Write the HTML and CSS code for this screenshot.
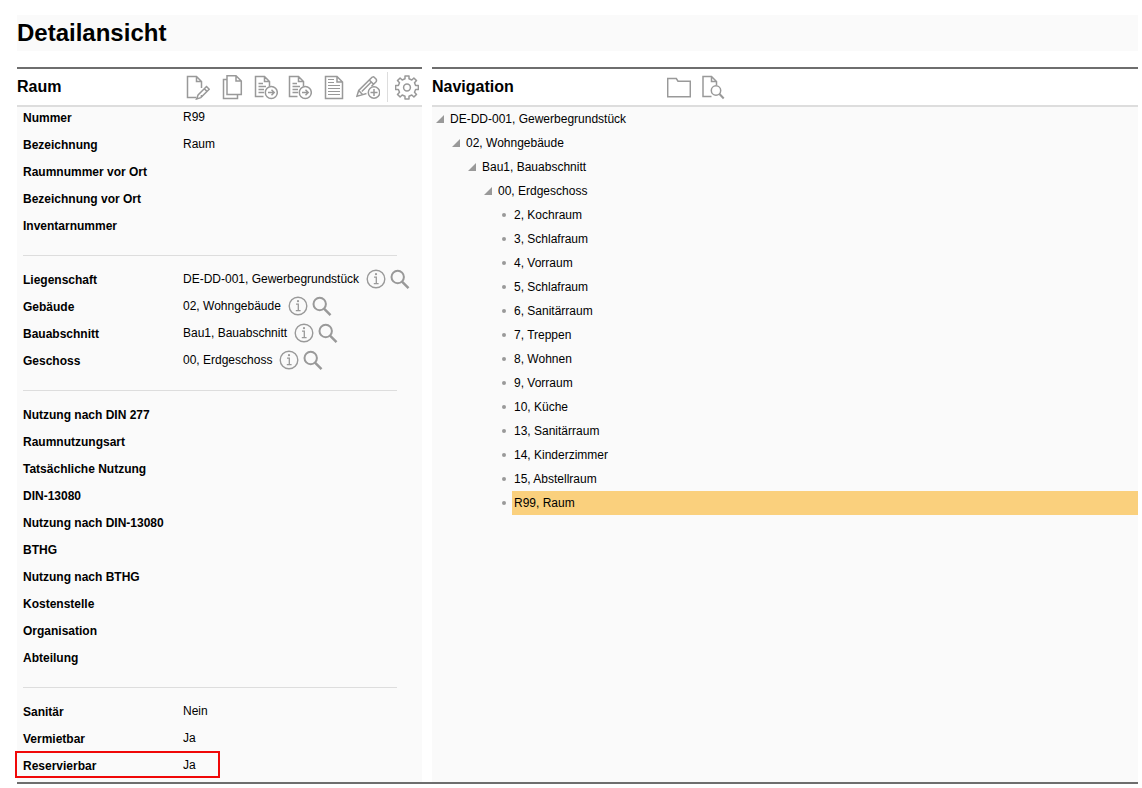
FILE: index.html
```html
<!DOCTYPE html>
<html lang="de">
<head>
<meta charset="utf-8">
<title>Detailansicht</title>
<link rel="stylesheet" href="styles.css">
</head>
<body>
<svg class="sprite" aria-hidden="true">
  <symbol id="info" viewBox="0 0 20 20"><circle cx="10" cy="10" r="8.8" stroke-width="1.4"/><path d="M8 8.2h2.3v6.3M7.8 14.6h4.8" stroke-width="1.3"/><circle cx="10" cy="5.2" r="1.1" fill="currentColor" stroke="none"/></symbol>
  <symbol id="search" viewBox="0 0 20 20"><circle cx="7.700" cy="8" r="6.200" stroke-width="2"/><path d="M12 12.600l6.500 6.600" stroke-width="2.400"/></symbol>
  <symbol id="send" viewBox="0 0 24 26"><path d="M9.500 22.500H1.500V2.500H10.500L15.500 7.500V12M10.500 2.500V7.500H15.500M4.500 9.500H9M4.500 12.500H12M4.500 15.500H10M4.500 18.500H10"/><circle cx="17.300" cy="18.500" r="6"/><path d="M14 18.500H20M17.500 15.800L20.200 18.500L17.500 21.200"/></symbol>
</svg>
<header class="page-header"><h1>Detailansicht</h1></header>
<main class="panels">
  <section class="panel">
    <div class="panel-head">
      <h2 class="title-room">Raum</h2>
      <div class="toolbar">
        <button type="button" class="tool" aria-label="Bearbeiten"><svg viewBox="0 0 24 26"><path d="M10 23.500H1.500V2.500H10.500L15.500 7.500V14M10.500 2.500V7.500H15.500M15.500 21V23"/><path d="M20.500 12.500L23.200 15.200L14.800 23.600L10.500 25L12.100 20.900ZM18.300 14.700L21 17.400"/></svg></button>
        <button type="button" class="tool" aria-label="Kopieren"><svg viewBox="0 0 24 26"><path d="M7 1.700H16L21.300 7V20.500H7ZM16 1.700V7H21.300M7 5.500H3.500V24.500H17.500V20.500"/></svg></button>
        <button type="button" class="tool" aria-label="Weiterleiten"><svg viewBox="0 0 24 26"><use href="#send"/></svg></button>
        <button type="button" class="tool" aria-label="Verschieben"><svg viewBox="0 0 24 26"><use href="#send"/></svg></button>
        <button type="button" class="tool" aria-label="Bericht"><svg viewBox="0 0 24 26"><path d="M3.500 2.500H15L20.500 8V24.500H3.500ZM15 2.500V8H20.500"/><path d="M6 5.500H12M6 8.500H12M6 11.500H18M6 14.500H18M6 17.500H18M6 20.500H18" stroke-width="1"/></svg></button>
        <button type="button" class="tool" aria-label="Neu"><svg viewBox="0 0 24 26"><path d="M10.500 19.500L6 20.900L.9 22.300L2.700 16.500L15.500 3.800Q17 2 18.700 3.700L19.800 4.800Q21.300 6.500 19.600 8.300L15.500 12.200M13.300 6L17.600 10.200M2.700 16.500L6.500 20.500M5.800 17.500L14.800 8.500"/><circle cx="18" cy="18.500" r="5.700"/><path d="M18 15V22M14.500 18.500H21.500"/></svg></button>
        <span class="tool-divider"></span>
        <button type="button" class="tool tool-last" aria-label="Einstellungen"><svg viewBox="0 0 24 26"><circle cx="12" cy="13.500" r="3.400"/><path d="M10 2H14V4.800L16.800 6L18.900 4L21.500 6.600L19.500 8.800L20.600 11.500H23.400V15.500H20.600L19.500 18.200L21.500 20.400L18.900 23L16.800 21L14 22.200V25H10V22.200L7.200 21L5.100 23L2.500 20.400L4.500 18.200L3.400 15.500H.6V11.500H3.400L4.500 8.800L2.500 6.600L5.100 4L7.200 6L10 4.800Z" stroke-linejoin="round"/></svg></button>
      </div>
    </div>
    <div class="details">
      <dl>
        <div class="row"><dt>Nummer</dt><dd>R99</dd></div>
        <div class="row"><dt>Bezeichnung</dt><dd>Raum</dd></div>
        <div class="row"><dt>Raumnummer vor Ort</dt><dd></dd></div>
        <div class="row"><dt>Bezeichnung vor Ort</dt><dd></dd></div>
        <div class="row"><dt>Inventarnummer</dt><dd></dd></div>
      </dl>
      <hr>
      <dl>
        <div class="row"><dt>Liegenschaft</dt><dd>DE-DD-001, Gewerbegrundstück <button type="button" class="mini" aria-label="Info"><svg><use href="#info"/></svg></button><button type="button" class="mini" aria-label="Suchen"><svg><use href="#search"/></svg></button></dd></div>
        <div class="row"><dt>Gebäude</dt><dd>02, Wohngebäude <button type="button" class="mini" aria-label="Info"><svg><use href="#info"/></svg></button><button type="button" class="mini" aria-label="Suchen"><svg><use href="#search"/></svg></button></dd></div>
        <div class="row"><dt>Bauabschnitt</dt><dd>Bau1, Bauabschnitt <button type="button" class="mini" aria-label="Info"><svg><use href="#info"/></svg></button><button type="button" class="mini" aria-label="Suchen"><svg><use href="#search"/></svg></button></dd></div>
        <div class="row"><dt>Geschoss</dt><dd>00, Erdgeschoss <button type="button" class="mini" aria-label="Info"><svg><use href="#info"/></svg></button><button type="button" class="mini" aria-label="Suchen"><svg><use href="#search"/></svg></button></dd></div>
      </dl>
      <hr>
      <dl>
        <div class="row"><dt>Nutzung nach DIN 277</dt><dd></dd></div>
        <div class="row"><dt>Raumnutzungsart</dt><dd></dd></div>
        <div class="row"><dt>Tatsächliche Nutzung</dt><dd></dd></div>
        <div class="row"><dt>DIN-13080</dt><dd></dd></div>
        <div class="row"><dt>Nutzung nach DIN-13080</dt><dd></dd></div>
        <div class="row"><dt>BTHG</dt><dd></dd></div>
        <div class="row"><dt>Nutzung nach BTHG</dt><dd></dd></div>
        <div class="row"><dt>Kostenstelle</dt><dd></dd></div>
        <div class="row"><dt>Organisation</dt><dd></dd></div>
        <div class="row"><dt>Abteilung</dt><dd></dd></div>
      </dl>
      <hr>
      <dl>
        <div class="row"><dt>Sanitär</dt><dd>Nein</dd></div>
        <div class="row"><dt>Vermietbar</dt><dd>Ja</dd></div>
        <div class="row marked"><dt>Reservierbar</dt><dd>Ja</dd></div>
      </dl>
    </div>
  </section>
  <section class="panel">
    <div class="panel-head">
      <h2 class="title-nav">Navigation</h2>
      <div class="toolbar">
        <button type="button" class="tool" aria-label="Ordner"><svg viewBox="0 0 24 26"><path d="M.7 4.500H9.300L11 7.200H23.300V22.700H.7Z"/></svg></button>
        <button type="button" class="tool" aria-label="Dokument suchen"><svg viewBox="0 0 24 26"><path d="M10.500 22.500H2V2.500H10.500L15.500 7.500V11M10.500 2.500V7.500H15.500"/><circle cx="15" cy="16.500" r="4.700"/><path d="M18.500 20L22.700 24.500" stroke-width="2"/></svg></button>
      </div>
    </div>
    <nav class="tree">
      <ul>
        <li><div class="node"><button type="button" class="toggle" aria-label="Zuklappen"></button><a href="#">DE-DD-001, Gewerbegrundstück</a></div>
          <ul>
            <li><div class="node"><button type="button" class="toggle" aria-label="Zuklappen"></button><a href="#">02, Wohngebäude</a></div>
              <ul>
                <li><div class="node"><button type="button" class="toggle" aria-label="Zuklappen"></button><a href="#">Bau1, Bauabschnitt</a></div>
                  <ul>
                    <li><div class="node"><button type="button" class="toggle" aria-label="Zuklappen"></button><a href="#">00, Erdgeschoss</a></div>
                      <ul>
                        <li class="node leaf"><a href="#">2, Kochraum</a></li>
                        <li class="node leaf"><a href="#">3, Schlafraum</a></li>
                        <li class="node leaf"><a href="#">4, Vorraum</a></li>
                        <li class="node leaf"><a href="#">5, Schlafraum</a></li>
                        <li class="node leaf"><a href="#">6, Sanitärraum</a></li>
                        <li class="node leaf"><a href="#">7, Treppen</a></li>
                        <li class="node leaf"><a href="#">8, Wohnen</a></li>
                        <li class="node leaf"><a href="#">9, Vorraum</a></li>
                        <li class="node leaf"><a href="#">10, Küche</a></li>
                        <li class="node leaf"><a href="#">13, Sanitärraum</a></li>
                        <li class="node leaf"><a href="#">14, Kinderzimmer</a></li>
                        <li class="node leaf"><a href="#">15, Abstellraum</a></li>
                        <li class="node leaf"><a href="#" class="selected" aria-current="true">R99, Raum</a></li>
                      </ul>
                    </li>
                  </ul>
                </li>
              </ul>
            </li>
          </ul>
        </li>
      </ul>
    </nav>
  </section>
</main>
</body>
</html>
```
FILE: styles.css
```css
*, *::before, *::after { box-sizing: border-box; }
body {
  margin: 0;
  padding: 15px 4px 4px 17px;
  background: #fff;
  color: #000;
  font: 12px/20px "Liberation Sans", Arial, sans-serif;
}
h1, h2, dl, dd, ul { margin: 0; padding: 0; }
ul { list-style: none; }
button {
  margin: 0;
  padding: 0;
  border: 0;
  background: none;
  color: #999;
  cursor: pointer;
}
svg { display: block; fill: none; stroke: #999; stroke-width: 1.5; }
.sprite { position: absolute; width: 0; height: 0; }
.page-header { background: #fafafa; }
h1 { font-size: 24px; line-height: 36px; }
.panels {
  display: grid;
  grid-template-columns: 405px 1fr;
  column-gap: 10px;
  margin-top: 16px;
  border-bottom: 2px solid #6e6e6e;
}
.panel {
  border-top: 2px solid #6e6e6e;
  background: #fafafa;
}
.panel-head {
  display: flex;
  align-items: center;
  height: 38px;
  border-bottom: 2px solid #ddd;
  background: #fff;
}
h2 { font-size: 16px; line-height: 36px; }
.title-room { width: 164px; }
.title-nav { width: 230px; }
.toolbar { display: flex; align-items: center; }
.tool { width: 34px; }
.tool svg { width: 24px; height: 26px; margin: 0 auto; }
.tool-divider { width: 1px; height: 30px; margin: 0 7px 0 2px; background: #ddd; }
.tool-last { width: 24px; }
.details { padding: 0 6px; }
.row {
  display: grid;
  grid-template-columns: 160px 1fr;
  height: 27px;
}
dt { font-weight: bold; line-height: 22px; }
dd { display: flex; align-items: center; height: 20px; white-space: nowrap; }
dd .mini:first-of-type { margin-left: 7px; }
.mini { margin-right: 4px; }
.mini svg { width: 20px; height: 20px; }
hr {
  height: 1px;
  margin: 13px 19px 13px 0;
  border: 0;
  background: #ddd;
}
.marked { position: relative; }
.marked::after {
  content: "";
  position: absolute;
  top: -4px;
  left: -8px;
  width: 205px;
  height: 27px;
  border: 2px solid #f00808;
}
.tree ul ul { padding-left: 16px; }
.node { display: flex; height: 24px; line-height: 24px; }
.node a { padding-left: 2px; color: inherit; text-decoration: none; }
.toggle { flex: none; width: 16px; padding-left: 4px; }
.toggle::before {
  content: "";
  display: block;
  width: 8px;
  height: 8px;
  background: #999;
  clip-path: polygon(100% 0, 100% 100%, 0 100%);
}
.leaf { align-items: center; }
.tree .leaf a { flex: 1; }
.leaf::before {
  content: "";
  width: 4px;
  height: 4px;
  margin: 0 6px;
  border-radius: 50%;
  background: #999;
}
.node .selected { background: #fad07d; }
```
